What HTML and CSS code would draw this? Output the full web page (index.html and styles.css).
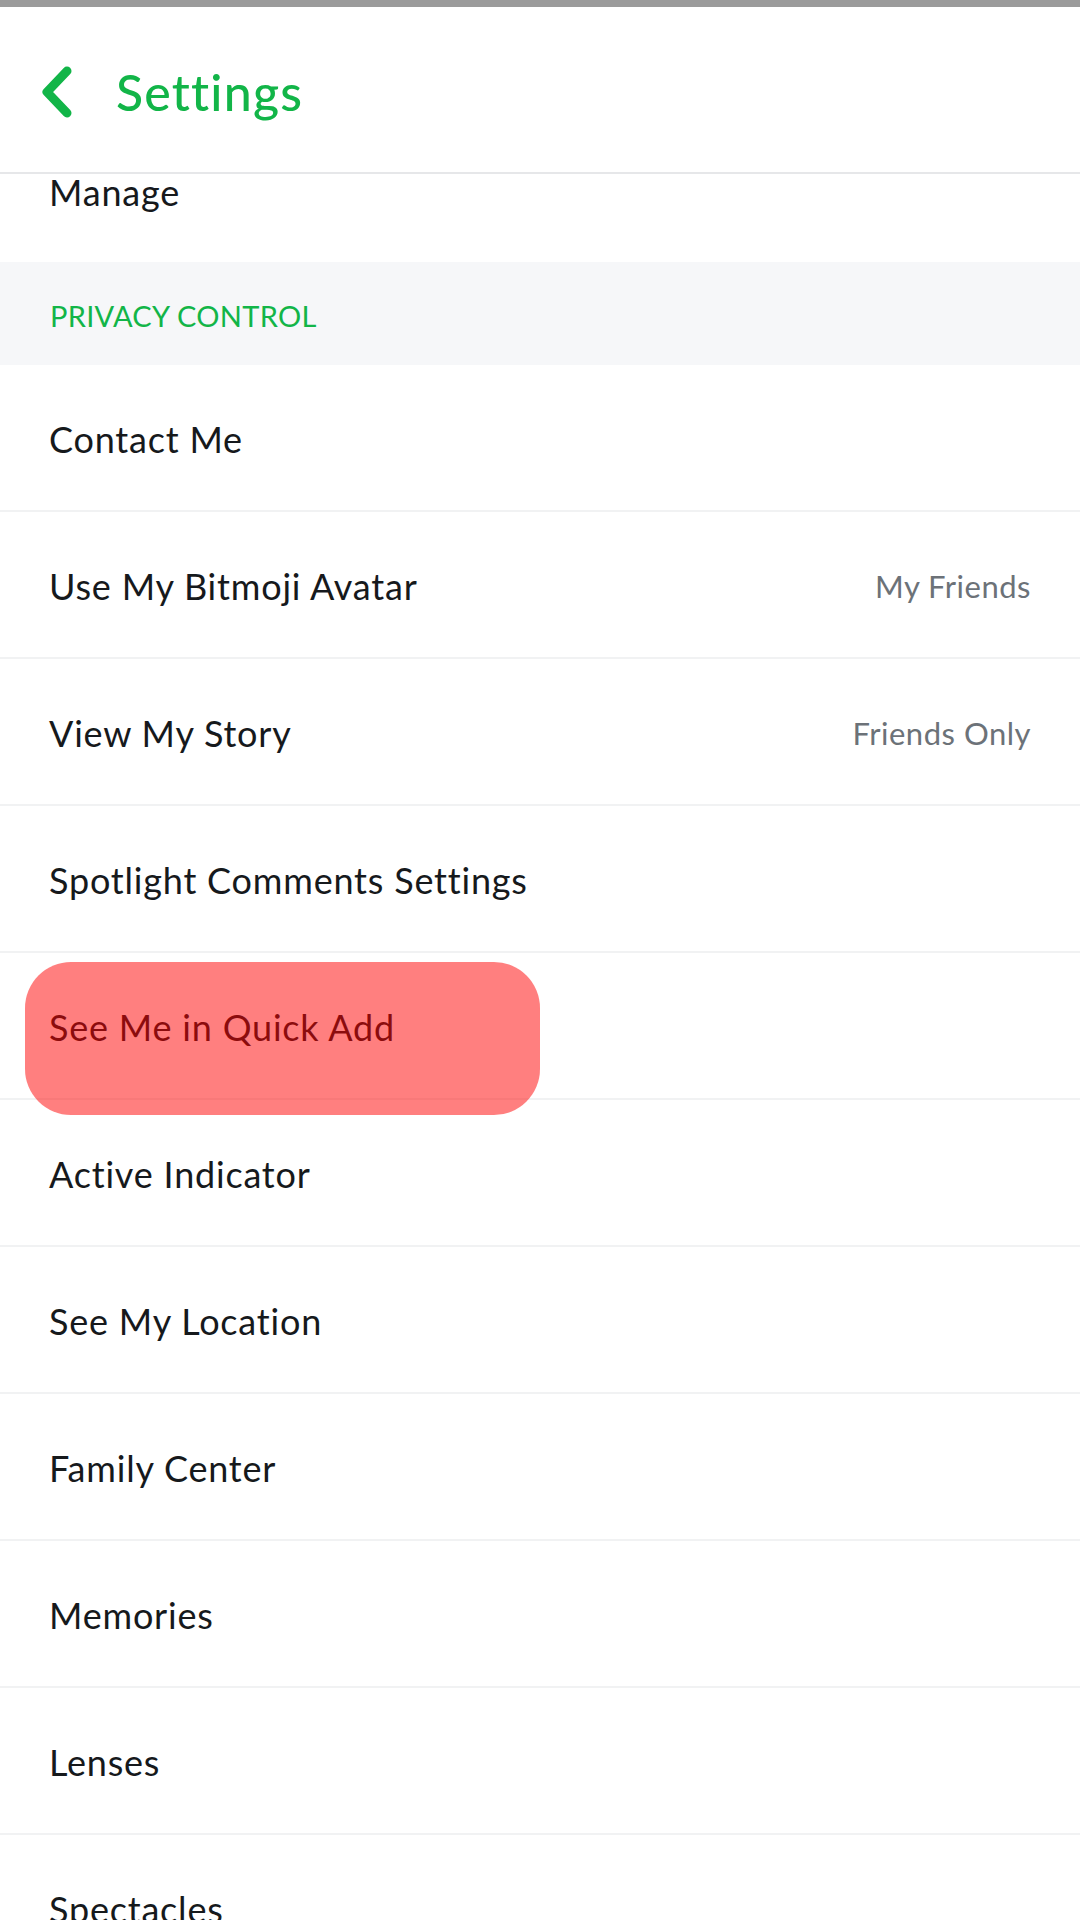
FILE: index.html
```html
<!DOCTYPE html>
<html lang="en">
<head>
<meta charset="utf-8">
<title>Settings</title>
<link rel="stylesheet" href="styles.css">
</head>
<body>
<div class="topbar"></div>
<header class="header">
  <svg class="back" width="34" height="52" viewBox="0 0 34 52" aria-hidden="true">
    <path d="M27 5 L7 26 L27 47" fill="none" stroke="#12b548" stroke-width="9" stroke-linecap="round" stroke-linejoin="round"/>
  </svg>
  <h1 class="title">Settings</h1>
</header>
<main class="list">
  <div class="row row-partial"><span class="label">Manage</span></div>
  <div class="section">PRIVACY CONTROL</div>
  <div class="row"><span class="label">Contact Me</span></div>
  <div class="row"><span class="label">Use My Bitmoji Avatar</span><span class="value">My Friends</span></div>
  <div class="row"><span class="label">View My Story</span><span class="value">Friends Only</span></div>
  <div class="row"><span class="label">Spotlight Comments Settings</span></div>
  <div class="row row-marked"><span class="label">See Me in Quick Add</span><span class="mark"></span></div>
  <div class="row"><span class="label">Active Indicator</span></div>
  <div class="row"><span class="label">See My Location</span></div>
  <div class="row"><span class="label">Family Center</span></div>
  <div class="row"><span class="label">Memories</span></div>
  <div class="row"><span class="label">Lenses</span></div>
  <div class="row"><span class="label">Spectacles</span></div>
</main>
</body>
</html>
```
FILE: styles.css
```css
* { box-sizing: border-box; }
html, body {
  margin: 0;
  padding: 0;
  background: #ffffff;
}
body {
  width: 1080px;
  height: 1920px;
  overflow: hidden;
  font-family: "Lato", "Noto Sans", sans-serif;
  color: #16191c;
}
.topbar {
  height: 7px;
  background: #9b9b9b;
}
.header {
  height: 167px;
  display: flex;
  align-items: center;
  padding: 5px 0 0 40px;
  gap: 42px;
  border-bottom: 2px solid #e6e7e9;
}
.back { flex: none; }
.title {
  margin: 0;
  font-size: 50px;
  font-weight: 500;
  color: #12b548;
  letter-spacing: 1.2px;
}
.list {
  display: flex;
  flex-direction: column;
}
.row {
  position: relative;
  height: 147px;
  flex: none;
  display: flex;
  align-items: center;
  justify-content: space-between;
  padding: 3px 49px 0 49px;
  border-bottom: 2px solid #f1f2f3;
  font-size: 36px;
}
.row-partial {
  height: 88px;
  align-items: flex-start;
  padding-top: 0;
  margin-top: -4px;
  border-bottom: none;
}
.label {
  letter-spacing: 0.8px;
}
.value {
  color: #6c7278;
  font-size: 31px;
  letter-spacing: 0.5px;
}
.section {
  height: 103px;
  flex: none;
  display: flex;
  align-items: center;
  padding: 4px 50px 0;
  margin-top: 4px;
  background: #f6f7f9;
  color: #12b548;
  font-size: 29px;
  letter-spacing: 0.3px;
}
.mark {
  position: absolute;
  left: 25px;
  top: 9px;
  width: 515px;
  height: 153px;
  border-radius: 46px;
  background: rgba(255, 0, 0, 0.5);
}
```
